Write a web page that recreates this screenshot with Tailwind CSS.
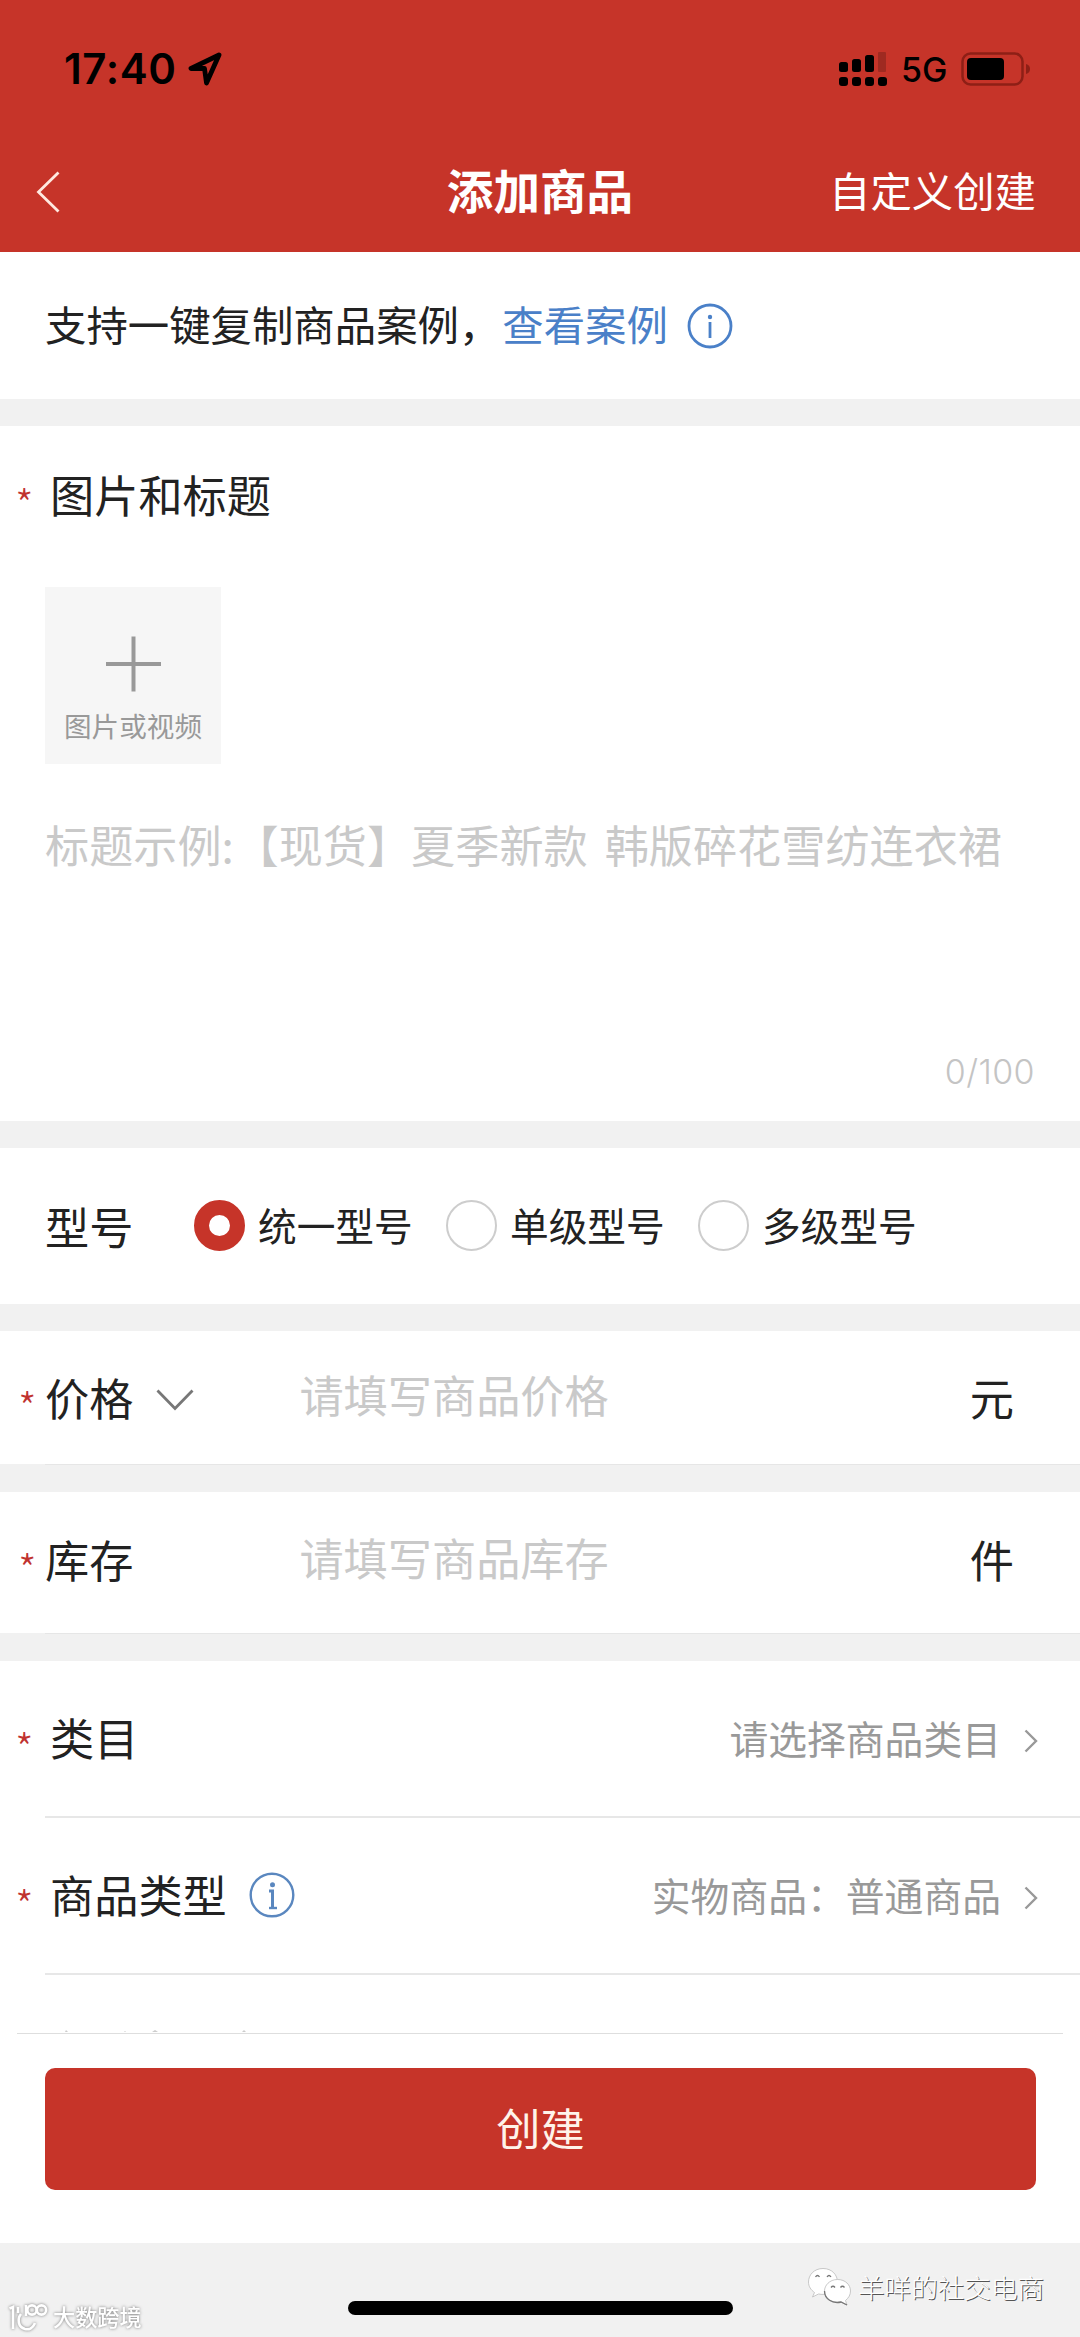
<!DOCTYPE html>
<html lang="zh-CN">
<head>
<meta charset="utf-8">
<title>添加商品</title>
<script src="https://cdn.jsdelivr.net/npm/@tailwindcss/browser@4"></script>
</head>
<body class="w-[1080px] h-[2337px] overflow-hidden bg-[#f1f1f1] text-[#222] font-['Noto_Sans_CJK_SC',sans-serif] relative flex flex-col whitespace-nowrap">
<header class="h-[252px] shrink-0 bg-[#c63429]">
  <!-- status bar -->
  <div class="h-[132px] flex items-center pl-[64px] pr-[49px] pt-[5px] text-black">
    <span class="font-['Inter'] font-semibold text-[42px] leading-none tracking-[0.6px]">17:40</span>
    <svg class="ml-[11px] w-[34px] h-[34px]" viewBox="0 0 34 34" fill="none" stroke="#000" stroke-width="4.800" stroke-linejoin="round"><path d="M31 3 3 16.500h13.500L18.500 31z"/></svg>
    <svg class="ml-auto w-[49px] h-[36px]" viewBox="0 0 49 36"><g fill="#000"><rect x="1" y="11" width="9" height="10" rx="2.500"/><rect x="14" y="8" width="9" height="13" rx="2.500"/><rect x="27" y="4" width="9" height="17" rx="2.500"/><rect x="1" y="26" width="9" height="9" rx="3"/><rect x="14" y="26" width="9" height="9" rx="3"/><rect x="27" y="26" width="9" height="9" rx="3"/><rect x="40" y="26" width="9" height="9" rx="3"/></g><rect x="40" y="1" width="8" height="20" rx="1" fill="#9f2a21"/></svg>
    <span class="ml-[14px] font-['Inter'] font-medium text-[34px] leading-none w-[60px] pt-[3px]">5G</span>
    <svg class="w-[70px] h-[34px]" viewBox="0 0 70 34"><rect x="1.500" y="1.500" width="60" height="31" rx="8" fill="none" stroke="#8e1f16" stroke-width="2.500"/><rect x="6" y="6" width="37" height="22" rx="4"/><path d="M65 12q4 1 4 5t-4 5z" fill="#8e1f16"/></svg>
  </div>
  <nav class="h-[119px] grid grid-cols-3 items-center pl-[36px] pr-[44px] text-white">
    <svg class="w-[24px] h-[42px]" viewBox="0 0 24 42" fill="none" stroke="#ffe9e0" stroke-width="2.800"><path d="M22.500 1.500 2.500 21l20 19.500"/></svg>
    <h1 class="justify-self-center pl-[8px] pb-[6px] font-bold text-[46.600px] leading-[60px]">添加商品</h1>
    <span class="justify-self-end pb-[5px] text-[41.400px] leading-[60px]">自定义创建</span>
  </nav>
</header>
<section class="h-[147px] shrink-0 bg-white flex items-center pl-[45px] text-[41.400px]">
  <span class="pb-[4px]">支持一键复制商品案例，</span><span class="text-[#4a80c8] ml-[2px] pb-[4px]">查看案例</span>
  <svg class="ml-[19px] w-[46px] h-[46px]" viewBox="0 0 46 46" fill="none" stroke="#4a80c8" stroke-width="2.800"><circle cx="23" cy="23" r="21"/><path d="M23 19v16"/><circle cx="23" cy="14" r="2.200" fill="#4a80c8" stroke="none"/></svg>
</section>
<section class="mt-[27px] h-[695px] shrink-0 bg-white flex flex-col">
  <div class="h-[136px] flex items-center text-[44.200px] pl-[15px]"><span class="w-[35px] text-[42px] font-light leading-none pt-[18px] text-[#c0322f]">*</span>图片和标题</div>
  <div class="mt-[25px] ml-[45px] w-[176px] h-[177px] bg-[#f6f6f6] text-[#999] flex flex-col items-center">
    <svg class="mt-[49px] w-[56px] h-[56px]" viewBox="0 0 56 56" stroke="#999" stroke-width="4"><path d="M28.500 0.500v55M1 28h55"/></svg>
    <span class="mt-[13px] text-[27.600px] leading-[40px]">图片或视频</span>
  </div>
  <p class="mt-[50px] ml-[45px] text-[44.150px] leading-[60px] text-[#c9c9c9]">标题示例<span class="inline-block w-[13px]">:</span>【现货】夏季新款<span class="inline-block w-[17px]"></span>韩版碎花雪纺连衣裙</p>
  <span class="mt-auto mb-[27px] mr-[45px] self-end font-['Inter'] font-light text-[34px] leading-[44px] tracking-[0.400px] text-[#c4c4c4]">0/100</span>
</section>
<section class="mt-[27px] h-[156px] shrink-0 bg-white flex items-center pl-[45px] text-[44.200px]">
  <span class="w-[149px]">型号</span>
  <div class="grid grid-cols-[252px_252px_252px] text-[38.700px]">
    <div class="flex items-center gap-[13px]"><i class="w-[51px] h-[51px] rounded-full border-[15.500px] border-[#c63429]"></i><span class="pb-[3px]">统一型号</span></div>
    <div class="flex items-center gap-[13px]"><i class="w-[51px] h-[51px] rounded-full border-2 border-[#cdcdcd]"></i><span class="pb-[3px]">单级型号</span></div>
    <div class="flex items-center gap-[13px]"><i class="w-[51px] h-[51px] rounded-full border-2 border-[#cdcdcd]"></i><span class="pb-[3px]">多级型号</span></div>
  </div>
</section>
<section class="mt-[27px] h-[133px] shrink-0 bg-white flex items-center pl-[18px] pr-[66px] text-[44.200px]">
  <span class="w-[27px] text-[42px] font-light leading-none pt-[16px] text-[#c0322f]">*</span><span>价格</span>
  <svg class="ml-[23px] mt-[4px] w-[38px] h-[22px]" viewBox="0 0 38 22" fill="none" stroke="#777" stroke-width="2.800"><path d="M1.500 1.500 19 19.500 36.500 1.500"/></svg>
  <span class="ml-[105px] mb-[6px] text-[#c9c9c9]">请填写商品价格</span><span class="ml-auto">元</span>
</section>
<div class="ml-[45px] h-px shrink-0 bg-[#e6e6e6]"></div>
<section class="mt-[27px] h-[141px] shrink-0 bg-white flex items-center pl-[18px] pr-[66px] pb-[6px] text-[44.200px]">
  <span class="w-[27px] text-[42px] font-light leading-none pt-[16px] text-[#c0322f]">*</span><span>库存</span>
  <span class="ml-[166px] mb-[5px] text-[#c9c9c9]">请填写商品库存</span><span class="ml-auto">件</span>
</section>
<div class="ml-[45px] h-px shrink-0 bg-[#e6e6e6]"></div>
<section class="mt-[27px] h-[372px] shrink-0 bg-white">
  <div class="h-[155px] flex items-center pl-[15px] pr-[42px] text-[44.200px]">
    <span class="w-[35px] text-[42px] font-light leading-none pt-[16px] text-[#c0322f]">*</span><span class="pb-[2px]">类目</span>
    <span class="ml-auto pb-[3px] text-[38.800px] text-[#999]">请选择商品类目</span>
    <svg class="ml-[23px] mt-[5px] w-[14px] h-[24px]" viewBox="0 0 14 24" fill="none" stroke="#999" stroke-width="2.400"><path d="M1.500 1.500 12 12 1.500 22.500"/></svg>
  </div>
  <div class="ml-[45px] h-[2px] bg-[#e7e7e7]"></div>
  <div class="h-[155px] flex items-center pl-[15px] pr-[42px] text-[44.200px]">
    <span class="w-[35px] text-[42px] font-light leading-none pt-[16px] text-[#c0322f]">*</span><span class="pb-[2px]">商品类型</span>
    <svg class="ml-[22px] mb-[2px] w-[46px] h-[46px]" viewBox="0 0 46 46" fill="none" stroke="#5a87bf" stroke-width="2.400"><circle cx="23" cy="23" r="21.300"/><path d="M20 19h3.500v16.500" stroke-width="3"/><path d="M20 36h8"/><circle cx="23.500" cy="12.800" r="2.500" fill="#5a87bf" stroke="none"/></svg>
    <span class="ml-auto pb-[3px] text-[38.800px] text-[#999]">实物商品：普通商品</span>
    <svg class="ml-[23px] mt-[5px] w-[14px] h-[24px]" viewBox="0 0 14 24" fill="none" stroke="#999" stroke-width="2.400"><path d="M1.500 1.500 12 12 1.500 22.500"/></svg>
  </div>
  <div class="ml-[45px] h-[2px] bg-[#e7e7e7]"></div>
  <!-- tops of the next row, cut by the footer -->
  <svg class="w-[300px] h-[58px]" viewBox="0 0 300 58" fill="#ccc"><path d="M65 57l1-2 2 2zM124 57l1-1 1 1zM152 57l3-2 3 2zM242 57l2-2 2 2z"/></svg>
</section>
<footer class="h-[210px] shrink-0 bg-white px-[17px]">
  <div class="h-px bg-[#dedede]"></div>
  <button class="mt-[34px] mx-[28px] w-[991px] h-[122px] rounded-[10px] bg-[#c63429] text-[#fff3ea] text-[44.200px] block pb-[3px]">创建</button>
</footer>
<div class="absolute left-[348px] top-[2301px] w-[385px] h-[14px] rounded-full bg-black"></div>
<div class="absolute left-[8px] top-[2300px] h-[33px] flex items-center gap-[4px] text-white text-[22.200px] font-medium leading-none [filter:drop-shadow(0_0_1.5px_#777)]">
  <svg class="w-[41px] h-[30px]" viewBox="0 0 41 30" fill="none" stroke="#fff" stroke-width="2.600"><path d="M1.500 6.500 5 5v22M10 5v6M13 12c-4 5-3 13 4 15 4 1 8-1 10-6M18 3v11"/><circle cx="24" cy="8" r="4.600"/><circle cx="33.500" cy="8" r="4.600"/></svg>
  <span>大数跨境</span>
</div>
<div class="absolute left-[807px] top-[2267px] h-[40px] flex items-center gap-[6px] text-[26.600px] font-light leading-none text-white">
  <svg class="w-[45px] h-[40px]" viewBox="0 0 45 40" fill="#fff" stroke="#bbb" stroke-width="0.800"><path d="M16 1.500C7 1.500 1.500 8 1.500 15c0 4.500 2.500 8 6 10.500L5.500 30l6-3c9 2 19-3 19-12C30.500 8 25 1.500 16 1.500z"/><path d="M30.500 12.500c-8 0-13 6-13 11.500 0 8 8 13 16.500 11l6 3-1.500-4.500c3-2.500 5-5.500 5-9.500 0-6-5-11.500-13-11.500z"/><path d="M8.500 10q2-3 4 0M20 10q2-3 4 0M24 20.500q2-2.500 4 0M33.500 20.500q2-2.500 4 0M17.500 24c0 8 8 13 16.500 11l6 3" fill="none" stroke="#777" stroke-width="1.300"/></svg>
  <span class="[text-shadow:1px_1px_0_#555]">羊咩的社交电商</span>
</div>
</body>
</html>
